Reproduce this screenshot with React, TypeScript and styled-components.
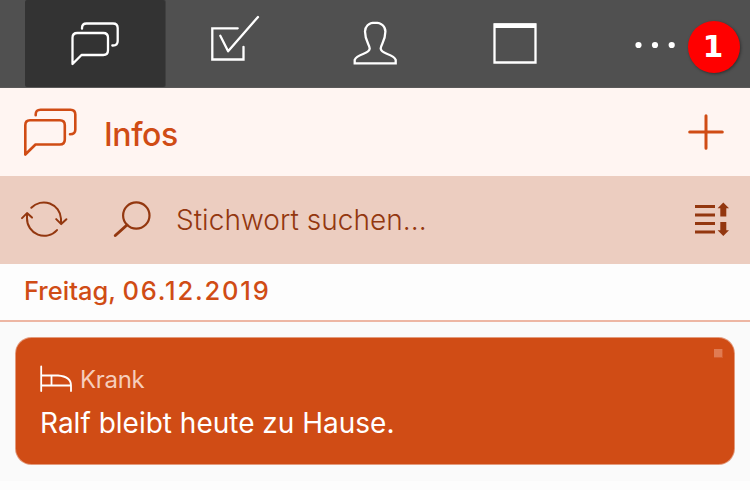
import React from 'react';
import styled, { createGlobalStyle } from 'styled-components';

const orange = '#d04c15';
const rust = '#93370f';

const GlobalStyle = createGlobalStyle`
  *, *::before, *::after { box-sizing: border-box; }
  body { margin: 0; background: #fdfdfd; font-family: Inter, "Liberation Sans", sans-serif; }
`;

const Screen = styled.div`
  width: 750px;
  height: 490px;
  overflow: hidden;
  display: flex;
  flex-direction: column;
  background: #fdfdfd;
`;

const TabBar = styled.nav`
  position: relative;
  display: flex;
  flex: none;
  height: 88px;
  padding: 0 25px;
  background: #505050;
  border-bottom: 1px solid #5a5959;
`;

const Tab = styled.button<{ $active?: boolean }>`
  width: 140px;
  height: 87px;
  padding: 0;
  border: 0;
  border-radius: 2px;
  display: flex;
  background: ${(p) => (p.$active ? '#333333' : 'transparent')};
  box-shadow: ${(p) => (p.$active ? '1px 0 0 #404040' : 'none')};
  color: #ffffff;
`;

const Badge = styled.span`
  position: absolute;
  left: 687.5px;
  top: 20.5px;
  width: 52px;
  height: 52px;
  border-radius: 50%;
  display: flex;
  align-items: center;
  justify-content: center;
  background: #ff0000;
  color: #ffffff;
  font: bold 29.5px/52px "DejaVu Sans", sans-serif;
  padding-right: 1px;
  box-shadow: 1px 1px 3px rgba(0, 0, 0, 0.4);
`;

const TitleBar = styled.header`
  display: flex;
  flex: none;
  align-items: center;
  height: 88px;
  padding-left: 24px;
  padding-right: 26px;
  background: #fff5f2;
  color: ${orange};
`;

const Title = styled.h1`
  flex: 1;
  margin: 5px 0 0 27px;
  font-size: 32px;
  line-height: 40px;
  font-weight: 500;
  letter-spacing: -0.4px;
`;

const SearchBar = styled.div`
  display: flex;
  flex: none;
  align-items: center;
  height: 88px;
  padding: 0 20px 0 21px;
  background: #eccdc0;
  color: ${rust};
`;

const SearchText = styled.span`
  flex: 1;
  margin-left: 25px;
  font-size: 28px;
  line-height: 36px;
  font-weight: 300;
  letter-spacing: 0.04px;
`;

const DateHeading = styled.h2`
  flex: none;
  height: 58px;
  margin: 0;
  padding-left: 24px;
  border-bottom: 2px solid #edb6a3;
  background: #fdfdfd;
  color: ${orange};
  font-size: 25.5px;
  line-height: 54px;
  font-weight: 500;
`;

const DateDigits = styled.time`
  letter-spacing: 1.8px;
`;

const List = styled.main`
  height: 159px;
  padding: 16px 16px 0;
  background: #fafafa;
`;

const Card = styled.article`
  position: relative;
  height: 126px;
  padding: 26px 24px;
  border-radius: 15.5px;
  background: ${orange};
  box-shadow: 0 0 0 1px rgba(208, 76, 21, 0.55);
  color: #ffffff;
`;

const CardMark = styled.i`
  position: absolute;
  right: 12px;
  top: 11px;
  width: 8px;
  height: 8px;
  background: #e07b52;
  box-shadow: 0.5px 0.5px 0 0.5px rgba(224, 123, 82, 0.4);
`;

const Category = styled.div`
  display: flex;
  align-items: center;
  height: 30px;
  gap: 8px;
  color: #f6cdbb;
  font-size: 24px;
  line-height: 30px;
  letter-spacing: -0.3px;
`;

const CategoryName = styled.span`
  padding-top: 2px;
`;

const Message = styled.p`
  margin: 11px 0 0 0;
  font-size: 28px;
  line-height: 36px;
`;

const Icon = styled.svg`
  display: block;
  flex: none;
  fill: none;
  stroke: currentColor;
  stroke-linecap: round;
  stroke-linejoin: round;
  overflow: visible;
`;

const SearchIcon = styled(Icon)`
  margin-left: 46px;
`;

const TabIcon = ({ children }: { children: React.ReactNode }) => (
  <Icon width="140" height="87" viewBox="0 0 140 87" strokeWidth="2.300">
    {children}
  </Icon>
);

const App = () => (
  <>
    <GlobalStyle />
    <Screen>
      <TabBar>
        <Tab $active aria-label="Infos">
          <TabIcon>
            <path d="M57 28.700v-.7q0-4.500 4.500-4.500h26.500q4.700 0 4.700 4.500v13q0 4.500-4.700 4.500h-.7" />
            <path d="M52.300 33h26q4.700 0 4.700 4.700v12.600q0 4.700-4.700 4.700H56.500l-9 9V37.700q0-4.700 4.800-4.700z" />
          </TabIcon>
        </Tab>
        <Tab aria-label="Aufgaben">
          <TabIcon>
            <path d="M72.700 28.300H47.300v31.200h31.200V46.800" strokeLinejoin="miter" />
            <path d="m55.300 35.800 7.800 15.400L93 17" />
          </TabIcon>
        </Tab>
        <Tab aria-label="Personen">
          <TabIcon>
            <path
              d="M70 22.600c-6.500 0-10 4-10 9 0 9.500 4.700 13 4.700 17 0 6-12.500 4.500-15 11.200v3.500h41v-3.500c-2.500-6.700-15-5.200-15-11.200 0-4 4.700-7.500 4.700-17 0-5-3.600-9-10.400-9z"
              strokeLinejoin="miter"
            />
          </TabIcon>
        </Tab>
        <Tab aria-label="Kalender">
          <TabIcon>
            <path d="M49.500 24.500h41v38h-41z" strokeLinejoin="miter" />
            <path d="M49 25.800h42" strokeWidth="4.600" strokeLinecap="butt" />
          </TabIcon>
        </Tab>
        <Tab aria-label="Mehr">
          <TabIcon>
            <g fill="currentColor" stroke="none">
              <circle cx="53.500" cy="45" r="3.100" />
              <circle cx="70" cy="45" r="3.100" />
              <circle cx="86.700" cy="45" r="3.100" />
            </g>
          </TabIcon>
        </Tab>
        <Badge>1</Badge>
      </TabBar>

      <TitleBar>
        <Icon width="53" height="48" viewBox="0 0 53 48" strokeWidth="2.600">
          <path d="M11.700 7.300V6.500q0-4.800 4.800-4.800h30q4.800 0 4.800 4.800v15.300q0 4.500-5.300 4.500" />
          <path d="M6 12.300h29.800q5 0 5 5V31.500q0 5-5 5H11.500L1.300 46.500V17.300q0-5 4.700-5z" />
        </Icon>
        <Title>Infos</Title>
        <Icon width="36" height="36" viewBox="0 0 36 36" strokeWidth="3">
          <path d="M18 1.700v32.600M1.700 18h32.600" />
        </Icon>
      </TitleBar>

      <SearchBar>
        <Icon width="46" height="38" viewBox="0 0 46 38" strokeWidth="2">
          <path d="M10.300 6.800A17.200 17.200 0 0 1 40 17.800v4.500M35.200 18.100l5 5 5.200-4.800" />
          <path d="M36 29.100A17.200 17.200 0 0 1 6 17.300V12.300M1 17.100l5-5 5 4.500" />
        </Icon>
        <SearchIcon width="38" height="38" viewBox="0 0 38 38" strokeWidth="2.200">
          <circle cx="23.300" cy="14.500" r="13.200" />
          <path d="m14 24-11.700 10.500" strokeWidth="3" />
        </SearchIcon>
        <SearchText>Stichwort suchen...</SearchText>
        <Icon width="36" height="36" viewBox="0 0 36 36" strokeWidth="3">
          <path d="M1 4.500h20M1 13h20M1 21.500h20M1 30h20" strokeLinecap="butt" />
          <path
            d="m29.300 .5 5.700 5.700h-2.700v8.300h-6V6.200h-2.700zM26.300 20v8.300h-2.700l5.700 5.700 5.700-5.700h-2.700V20z"
            fill="currentColor"
            stroke="none"
          />
        </Icon>
      </SearchBar>

      <DateHeading>
        Freitag, <DateDigits dateTime="2019-12-06">06.12.2019</DateDigits>
      </DateHeading>
      <List>
        <Card>
          <CardMark />
          <Category>
            <Icon width="32" height="26" viewBox="0 0 32 26" strokeWidth="1.800" color="#fff">
              <path d="M1.200 .5V25M1.200 9.500H18Q31 10.500 31 19.500V25M1.200 19.500H31M11.500 9.500v10" />
            </Icon>
            <CategoryName>Krank</CategoryName>
          </Category>
          <Message>Ralf bleibt heute zu Hause.</Message>
        </Card>
      </List>
    </Screen>
  </>
);

export default App;
